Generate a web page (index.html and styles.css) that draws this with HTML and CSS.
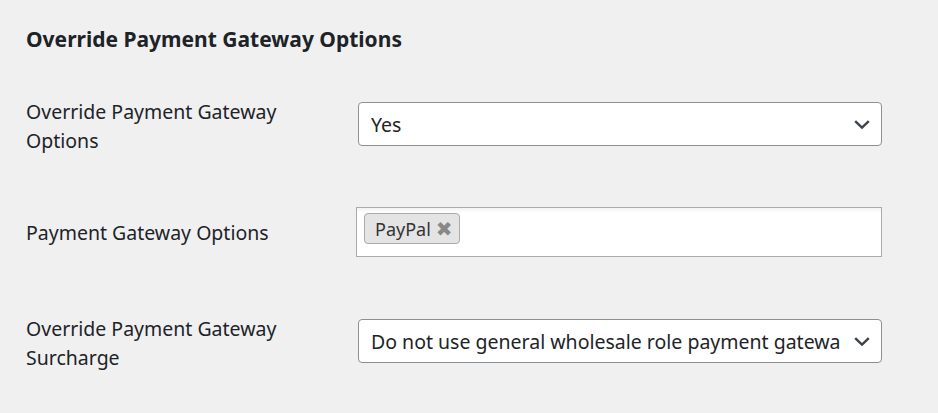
FILE: index.html
```html
<!DOCTYPE html>
<html lang="en">
<head>
  <meta charset="UTF-8">
  <title>Override Payment Gateway Options</title>
  <link rel="stylesheet" href="styles.css">
</head>
<body>
  <div class="wrap">
    <h2 class="section-title">Override Payment Gateway Options</h2>

    <div class="form-table">
      <div class="form-row">
        <label class="form-label form-label-wrap">Override Payment Gateway Options</label>
        <div class="fake-select">
          <span class="select-value">Yes</span>
          <svg class="chevron" width="16" height="9" viewBox="0 0 16 9"><path d="M1.2 1.2 L8 7.6 L14.8 1.2" fill="none" stroke="#3c434a" stroke-width="2.4"/></svg>
        </div>
      </div>

      <div class="form-row">
        <label class="form-label">Payment Gateway Options</label>
        <div class="tag-input">
          <span class="tag">PayPal <span class="tag-remove">&#10006;</span></span>
        </div>
      </div>

      <div class="form-row form-row-last">
        <label class="form-label form-label-wrap">Override Payment Gateway Surcharge</label>
        <div class="fake-select">
          <span class="select-value">Do not use general wholesale role payment gatewa</span>
          <svg class="chevron" width="16" height="9" viewBox="0 0 16 9"><path d="M1.2 1.2 L8 7.6 L14.8 1.2" fill="none" stroke="#3c434a" stroke-width="2.4"/></svg>
        </div>
      </div>
    </div>
  </div>
</body>
</html>
```

FILE: styles.css
```css
body {
  margin: 0;
  background: #f0f0f1;
  color: #1d2327;
  font-family: 'Noto Sans', 'Open Sans', sans-serif;
  font-size: 19.5px;
}

.wrap {
  padding: 0 26px;
}

.section-title {
  font-size: 21px;
  font-weight: bold;
  line-height: 28px;
  margin: 25px 0 17px 0;
}

.form-row {
  display: grid;
  grid-template-columns: 332px 524px;
  align-items: center;
  min-height: 108px;
}

.form-row-last {
  padding-top: 1px;
}

.form-label {
  line-height: 29px;
  padding-right: 60px;
}

.form-label-wrap {
  padding-top: 4px;
}

.fake-select {
  display: flex;
  align-items: center;
  gap: 10px;
  height: 44px;
  box-sizing: border-box;
  padding: 0 11px 0 12px;
  background: white;
  border: 1px solid #8c8f94;
  border-radius: 4px;
}

.select-value {
  flex: 1;
  min-width: 0;
  white-space: nowrap;
}

.chevron {
  flex-shrink: 0;
}

.tag-input {
  height: 50px;
  box-sizing: border-box;
  margin-left: -2px;
  padding: 5px 7px;
  background: white;
  border: 1px solid #aaa;
  box-shadow: inset 0 5px 4px -3px rgba(0,0,0,0.06);
}

.tag {
  display: inline-flex;
  align-items: center;
  gap: 5px;
  height: 31px;
  box-sizing: border-box;
  padding: 0 6px 0 10px;
  background: #e4e4e4;
  border: 1px solid #aaa;
  border-radius: 4px;
  font-size: 18px;
  color: #333;
}

.tag-remove {
  color: #888;
  font-size: 20px;
  font-weight: bold;
  font-family: 'DejaVu Sans', sans-serif;
}
```
